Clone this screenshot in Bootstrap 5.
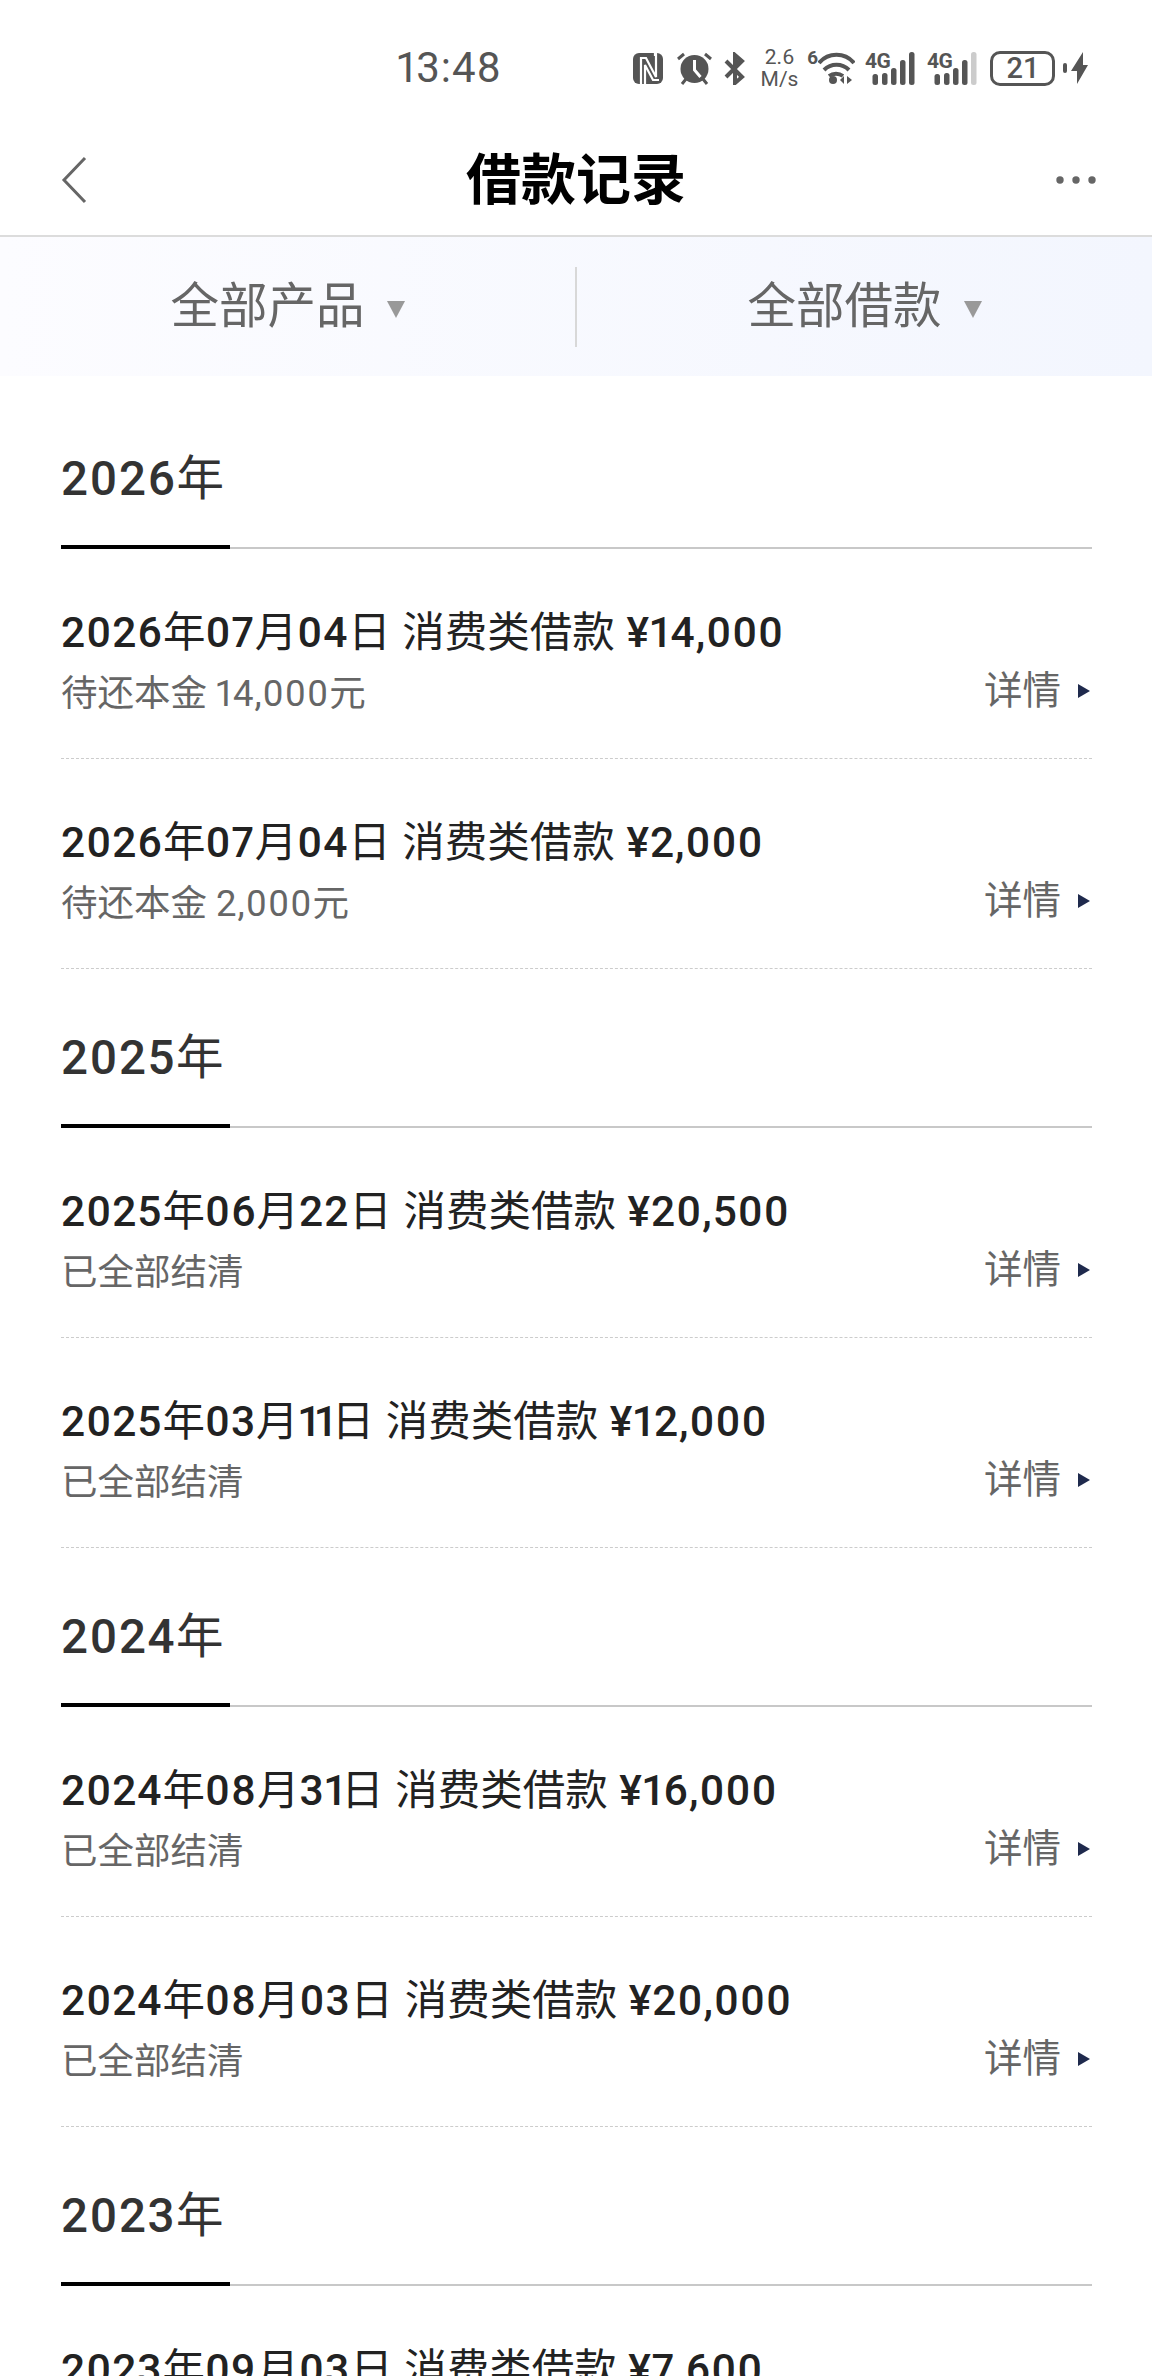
<!DOCTYPE html>
<html>

<head>
  <meta charset="utf-8">
  <meta name="viewport" content="width=device-width">
  <title>借款记录</title>
  <link href="https://cdn.jsdelivr.net/npm/bootstrap@5.3.2/dist/css/bootstrap.min.css" rel="stylesheet" type="text/css" />
  <script src="https://cdn.jsdelivr.net/npm/bootstrap@5.3.2/dist/js/bootstrap.bundle.min.js"></script>
  <style>
    html, body { height: 2376px; overflow: hidden; background: #fff; }
    body { font-family: Roboto, "Noto Sans CJK SC", sans-serif; color: #222; font-variant-numeric: proportional-nums; }

    /* status bar */
    .stat-bar { height: 92px; padding: 49px 0 0 397px; color: #555; }
    .stat-time { width: 103px; margin-top: -3px; font-size: 42px; line-height: 44px; letter-spacing: 1px; color: #555; }
    .stat-icons { margin-left: 133px; height: 38px; }
    .stat-alarm { margin-left: 14px; }
    .stat-bt { margin-left: 12px; }
    .stat-speed { width: 39px; margin: 0 9px 0 15px; font-size: 21px; line-height: 22px; text-align: center; }
    .stat-six { align-self: flex-start; margin: 0 0 0 -1px; width: 11px; font-size: 19px; line-height: 18px; font-weight: 700; }
    .stat-sim { margin-left: 10px; }
    .stat-sim-txt { font-size: 21px; line-height: 18px; font-weight: 700; letter-spacing: -.5px; }
    .stat-batt { width: 65px; height: 35px; margin-left: 11px; border: 3px solid #555; border-radius: 10px; font-size: 29px; line-height: 29px; text-align: center; font-weight: 500; letter-spacing: 1px; }
    .stat-nub { margin-left: 8px; }
    .stat-bolt { margin-left: 4px; }

    /* title bar */
    .title-bar { height: 145px; padding: 33px 55px 0 61px; border-bottom: 2px solid #dcdcdc; }
    .title-txt { margin-right: 6px; font-size: 55px; line-height: 76px; font-weight: 700; color: #000; }
    .title-side { width: 42px; }

    /* filter */
    .filter-bar { height: 139px; background: linear-gradient(90deg, #fcfcff, #f3f6fe); }
    .filter-item { width: 50%; font-size: 48.500px; line-height: 60px; color: #666; }
    .filter-tri { width: 0; height: 0; margin-left: 22px; margin-top: 6px; border-left: 9px solid transparent; border-right: 9px solid transparent; border-top: 17px solid #999; }
    .filter-sep { width: 2px; height: 80px; flex: none; background: #d8d8d8; }

    /* list */
    .loan-list { margin-top: 14px; padding: 0 60px 0 61px; }
    .year-head { padding-top: 59px; border-bottom: 2px solid #c8c8c8; }
    .year-txt { width: 169px; height: 100px; margin-bottom: -2px; border-bottom: 4px solid #000; font-size: 47.500px; line-height: 60px; color: #333; }
    .year-num { font-weight: 500; letter-spacing: 1.500px; }
    .loan-row { padding: 56px 0 42px; border-bottom: 1px dashed #ccc; }
    .loan-title { margin-bottom: 11px; font-size: 42.500px; line-height: 56px; color: #222; white-space: nowrap; word-spacing: 1px; }
    .loan-num { font-weight: 500; letter-spacing: 1px; }
    .loan-one { letter-spacing: -3px; }
    .loan-sub { font-size: 36.500px; line-height: 44px; color: #666; }
    .sub-num { letter-spacing: 1px; }
    .loan-more { margin: 0 2px 3px 0; font-size: 38.500px; line-height: 44px; color: #666; }
    .loan-tri { width: 0; height: 0; margin-left: 17px; border-top: 7px solid transparent; border-bottom: 7px solid transparent; border-left: 12px solid #1f2a4d; }
  </style>
</head>

<body>
  <div class="stat-bar d-flex align-items-start">
    <div class="stat-time">13:48</div>
    <div class="stat-icons d-flex align-items-center">
      <!-- nfc -->
      <svg width="30" height="31" viewBox="0 0 30 31" fill="#555"><rect width="30" height="31" rx="6"/><path d="M8 31V5h5l10 19V0M12 31V12l8 15h6M22 0v3" fill="none" stroke="#fff" stroke-width="2.200"/></svg>
      <!-- alarm -->
      <svg class="stat-alarm" width="35" height="33" viewBox="0 0 35 33" fill="#555"><circle cx="17.500" cy="17" r="14"/><path d="M17.500 8v10l6 7" fill="none" stroke="#fff" stroke-width="3"/><path d="M1 7l6-5M34 7l-6-5M9 27l-4 5M26 27l4 5" stroke="#555" stroke-width="3" fill="none"/></svg>
      <!-- bluetooth -->
      <svg class="stat-bt" width="21" height="33" viewBox="0 0 21 33" fill="none" stroke="#555" stroke-width="4"><path d="M2 9l16 16-7 6V3l7 6-2 2L2 25"/><path d="M11 5v11l6-6z" fill="#555" stroke="none"/></svg>
      <div class="stat-speed">2.6<br>M/s</div>
      <div class="stat-six">6</div>
      <!-- wifi -->
      <svg width="37" height="32" viewBox="0 0 37 32" fill="none" stroke="#555" stroke-width="4"><path d="M1 11C10 0 27 0 36 11M6 18c7-7 18-7 25 0M11 24c4-3 10-3 14 0"/><circle cx="15" cy="28" r="4" fill="#555" stroke="none"/><path d="M22 28l4-4v8zM29 24v8l5-4z" fill="#555" stroke="none"/></svg>
      <!-- sim 1 -->
      <div class="stat-sim position-relative">
        <svg class="d-block" width="52" height="33" viewBox="0 0 52 33" fill="#555"><rect x="7.500" y="22" width="5.500" height="11" rx="2.500"/><rect x="17" y="21" width="5.500" height="12" rx="2.500"/><rect x="26" y="16" width="5.500" height="17" rx="2.500"/><rect x="35" y="8" width="5.500" height="25" rx="2.500"/><rect x="44" width="5.500" height="33" rx="2.500"/></svg>
        <span class="stat-sim-txt position-absolute top-0 start-0">4G</span>
      </div>
      <!-- sim 2 -->
      <div class="stat-sim position-relative">
        <svg class="d-block" width="52" height="33" viewBox="0 0 52 33" fill="#555"><rect x="7.500" y="22" width="5.500" height="11" rx="2.500"/><rect x="17" y="21" width="5.500" height="12" rx="2.500"/><rect x="26" y="16" width="5.500" height="17" rx="2.500"/><rect x="35" y="8" width="5.500" height="25" rx="2.500"/><rect x="44" width="5.500" height="33" rx="2.500" fill="#ccc"/></svg>
        <span class="stat-sim-txt position-absolute top-0 start-0">4G</span>
      </div>
      <div class="stat-batt">21</div>
      <svg class="stat-nub" width="4" height="10" viewBox="0 0 4 10" fill="#555"><rect width="4" height="10" rx="2"/></svg>
      <!-- charging bolt -->
      <svg class="stat-bolt" width="17" height="32" viewBox="0 0 17 32" fill="#555"><path d="M12 0v13h5L6 32V19H0z"/></svg>
    </div>
  </div>

  <div class="title-bar d-flex align-items-center justify-content-between">
    <div class="title-side">
      <svg class="d-block" width="26" height="48" viewBox="0 0 26 48" fill="none" stroke="#666" stroke-width="3"><path d="M24 2 3 24l21 22"/></svg>
    </div>
    <div class="title-txt">借款记录</div>
    <div class="title-side">
      <svg class="d-block" width="42" height="10" viewBox="0 0 42 10" fill="#666"><circle cx="5" cy="5" r="3.700"/><circle cx="21" cy="5" r="3.700"/><circle cx="37" cy="5" r="3.700"/></svg>
    </div>
  </div>

  <div class="filter-bar d-flex align-items-center">
    <div class="filter-item d-flex justify-content-center align-items-center">全部产品<span class="filter-tri"></span></div>
    <div class="filter-sep"></div>
    <div class="filter-item d-flex justify-content-center align-items-center">全部借款<span class="filter-tri"></span></div>
  </div>

  <div class="loan-list">
    <div class="year-head"><div class="year-txt"><span class="year-num">2026</span>年</div></div>
    <div class="loan-row d-flex justify-content-between align-items-end">
      <div><div class="loan-title"><span class="loan-num">2026</span>年<span class="loan-num">07</span>月<span class="loan-num">04</span>日 消费类借款 <span class="loan-num">¥14,000</span></div><div class="loan-sub">待还本金 <span class="sub-num">14,000</span>元</div></div>
      <div class="loan-more d-flex align-items-center">详情<span class="loan-tri"></span></div>
    </div>
    <div class="loan-row d-flex justify-content-between align-items-end">
      <div><div class="loan-title"><span class="loan-num">2026</span>年<span class="loan-num">07</span>月<span class="loan-num">04</span>日 消费类借款 <span class="loan-num">¥2,000</span></div><div class="loan-sub">待还本金 <span class="sub-num">2,000</span>元</div></div>
      <div class="loan-more d-flex align-items-center">详情<span class="loan-tri"></span></div>
    </div>

    <div class="year-head"><div class="year-txt"><span class="year-num">2025</span>年</div></div>
    <div class="loan-row d-flex justify-content-between align-items-end">
      <div><div class="loan-title"><span class="loan-num">2025</span>年<span class="loan-num">06</span>月<span class="loan-num">22</span>日 消费类借款 <span class="loan-num">¥20,500</span></div><div class="loan-sub">已全部结清</div></div>
      <div class="loan-more d-flex align-items-center">详情<span class="loan-tri"></span></div>
    </div>
    <div class="loan-row d-flex justify-content-between align-items-end">
      <div><div class="loan-title"><span class="loan-num">2025</span>年<span class="loan-num">03</span>月<span class="loan-num loan-one">11</span>日 消费类借款 <span class="loan-num">¥12,000</span></div><div class="loan-sub">已全部结清</div></div>
      <div class="loan-more d-flex align-items-center">详情<span class="loan-tri"></span></div>
    </div>

    <div class="year-head"><div class="year-txt"><span class="year-num">2024</span>年</div></div>
    <div class="loan-row d-flex justify-content-between align-items-end">
      <div><div class="loan-title"><span class="loan-num">2024</span>年<span class="loan-num">08</span>月<span class="loan-num">3<span class="loan-one">1</span></span>日 消费类借款 <span class="loan-num">¥16,000</span></div><div class="loan-sub">已全部结清</div></div>
      <div class="loan-more d-flex align-items-center">详情<span class="loan-tri"></span></div>
    </div>
    <div class="loan-row d-flex justify-content-between align-items-end">
      <div><div class="loan-title"><span class="loan-num">2024</span>年<span class="loan-num">08</span>月<span class="loan-num">03</span>日 消费类借款 <span class="loan-num">¥20,000</span></div><div class="loan-sub">已全部结清</div></div>
      <div class="loan-more d-flex align-items-center">详情<span class="loan-tri"></span></div>
    </div>

    <div class="year-head"><div class="year-txt"><span class="year-num">2023</span>年</div></div>
    <div class="loan-row d-flex justify-content-between align-items-end">
      <div><div class="loan-title"><span class="loan-num">2023</span>年<span class="loan-num">09</span>月<span class="loan-num">03</span>日 消费类借款 <span class="loan-num">¥7,600</span></div></div>
    </div>
  </div>
</body>

</html>
